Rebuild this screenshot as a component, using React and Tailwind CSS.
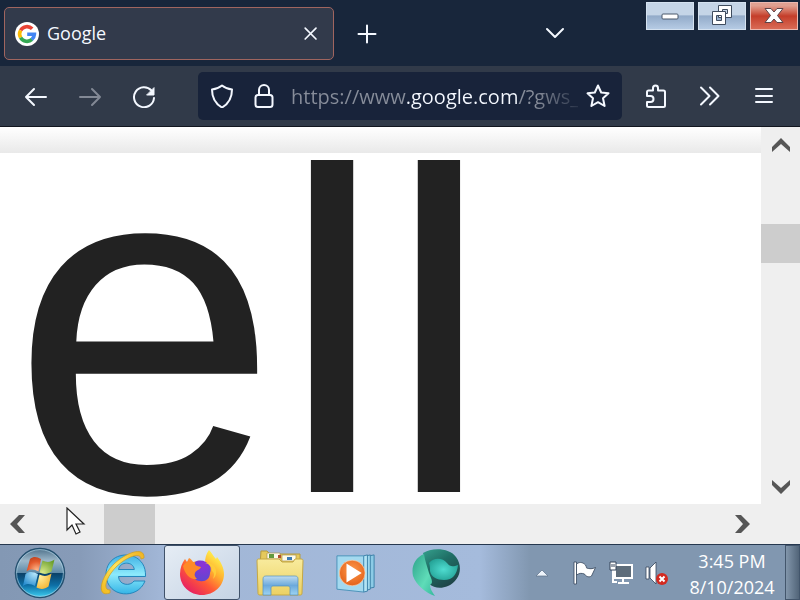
import React from 'react';

// ── Icons ──

function GoogleIcon() {
  return (
    <svg viewBox="0 0 24 24" className="w-6 h-6 shrink-0" aria-hidden="true">
      <circle cx="12" cy="12" r="12" fill="#fff" />
      <g fill="none" strokeWidth="3.6">
        <path d="M5.600 8.400A7.400 7.400 0 0 1 17.200 6.800" stroke="#ea4335" />
        <path d="M5.600 15.700A7.400 7.400 0 0 1 5.600 8.300" stroke="#fbbc05" />
        <path d="M17 17.400A7.400 7.400 0 0 1 5.600 15.600" stroke="#34a853" />
        <path d="M12.200 12.200H19.400A7.400 7.400 0 0 1 16.800 17.500" stroke="#4285f4" />
      </g>
    </svg>
  );
}

function LineIcon({ children, className = 'w-6 h-6' }) {
  return (
    <svg
      viewBox="0 0 24 24"
      className={className}
      fill="none"
      stroke="currentColor"
      strokeWidth="2"
      strokeLinecap="round"
      strokeLinejoin="round"
      aria-hidden="true"
    >
      {children}
    </svg>
  );
}

function ScrollArrow({ d }) {
  return (
    <svg viewBox="0 0 20 20" className="w-5 h-5" fill="#565656" aria-hidden="true">
      <path d={d} />
    </svg>
  );
}

function StartOrb() {
  return (
    <svg viewBox="0 0 52 52" className="w-13 h-13" aria-hidden="true">
      <defs>
        <linearGradient id="orbTop" x1="0" y1="0" x2="0" y2="1">
          <stop offset="0" stopColor="#4d7089" />
          <stop offset="0.25" stopColor="#9db8ca" />
          <stop offset="0.49" stopColor="#5d8aa8" />
          <stop offset="0.5" stopColor="#0b4066" />
          <stop offset="0.75" stopColor="#0d6fa6" />
          <stop offset="1" stopColor="#3fd0f2" />
        </linearGradient>
        <radialGradient id="orbRed" cx="0.7" cy="0.9" r="1">
          <stop offset="0" stopColor="#ffb98c" />
          <stop offset="0.6" stopColor="#e2592c" />
          <stop offset="1" stopColor="#b8401d" />
        </radialGradient>
        <radialGradient id="orbGreen" cx="0.2" cy="0.9" r="1">
          <stop offset="0" stopColor="#d8e98a" />
          <stop offset="1" stopColor="#6a9e2b" />
        </radialGradient>
        <radialGradient id="orbBlue" cx="0.8" cy="0.1" r="1">
          <stop offset="0" stopColor="#b6e6fb" />
          <stop offset="1" stopColor="#2b8fd0" />
        </radialGradient>
        <radialGradient id="orbYellow" cx="0.2" cy="0.2" r="1">
          <stop offset="0" stopColor="#fff0a0" />
          <stop offset="1" stopColor="#f2ae27" />
        </radialGradient>
      </defs>
      <circle cx="26" cy="26" r="24.5" fill="url(#orbTop)" stroke="#24506f" strokeWidth="1.500" />
      <circle cx="26" cy="26" r="23.4" fill="none" stroke="#b8dcee" strokeOpacity="0.6" />
      <path d="M16 12c4-3 7-2 11 0l-2.500 12.500c-4-2-8-3-12 0z" fill="url(#orbRed)" />
      <path d="M28.500 13.500c4 2 8 2 12-1l-3 12c-4 3-8 3-12 1z" fill="url(#orbGreen)" />
      <path d="M11.500 27c4-3 8-2 12.500 0l-3 12c-4-2-8-3-12 0z" fill="url(#orbBlue)" />
      <path d="M25.500 27.500c4 2 8 2 12-1l-3 13c-4 3-8 3-12 1z" fill="url(#orbYellow)" />
    </svg>
  );
}

function ExplorerE() {
  return (
    <svg viewBox="0 0 48 48" className="w-12 h-12" aria-hidden="true">
      <defs>
        <linearGradient id="ieBlue" x1="0" y1="0" x2="0" y2="1">
          <stop offset="0" stopColor="#3fb0e4" />
          <stop offset="0.5" stopColor="#8deafc" />
          <stop offset="1" stopColor="#35b4e6" />
        </linearGradient>
        <linearGradient id="ieGold" x1="0" y1="1" x2="1" y2="0">
          <stop offset="0" stopColor="#f0b81c" />
          <stop offset="0.5" stopColor="#ffe45c" />
          <stop offset="1" stopColor="#eeb01e" />
        </linearGradient>
      </defs>
      <path
        d="M45.500 27.500H18.500c.5 9 12 10 15.500 4.500H45C38 51 7 49 6 26 6 -1 47-1 45.500 27.500zM18.500 20.500h15.800c-1-8.500-14.300-8.500-15.800 0z"
        fill="url(#ieBlue)"
        stroke="#2487bd"
        strokeWidth="1"
      />
      <path
        d="M10 44C-4 49 0 29 13 16 26 3 45-3 44 9l-3 1c0-7-13-3-24 7C6 28 2 41 10 41z"
        fill="url(#ieGold)"
        stroke="#cf9d20"
        strokeWidth="0.700"
      />
    </svg>
  );
}

function FirefoxIcon() {
  return (
    <svg viewBox="0 0 48 48" className="w-12 h-12" aria-hidden="true">
      <defs>
        <linearGradient id="fxBody" x1="0.85" y1="0.1" x2="0.2" y2="0.9">
          <stop offset="0" stopColor="#fff44f" />
          <stop offset="0.35" stopColor="#ffb02e" />
          <stop offset="0.65" stopColor="#ff5a36" />
          <stop offset="1" stopColor="#e82360" />
        </linearGradient>
        <radialGradient id="fxGlobe" cx="0.6" cy="0.2" r="0.9">
          <stop offset="0" stopColor="#8f32d6" />
          <stop offset="1" stopColor="#5a49d0" />
        </radialGradient>
      </defs>
      <path
        d="M31 1c3 3 4 6 7 9l1-2c4 5 7 11 7 17 0 12-10 21-22 21S2 37 2 25c0-6 2-11 5-15l2 3 2-4c2 1 3 2 4 4 5-1 9 0 12 1 0-5 1-9 4-13z"
        fill="url(#fxBody)"
      />
      <path
        d="M17 13c5-3 12-1 15 4 1 2 1 4 0 7 0 6-5 9-10 8-5 0-8-4-8-9z"
        fill="url(#fxGlobe)"
      />
      <path d="M5 17c3-5 8-6 12-3 0 2 1 3 6 4-1 3-5 3-6 6-1 2 0 4 2 6-6 1-12-4-14-13z" fill="#ff8a27" />
      <path d="M27 14c5 1 7 4 7 8 3 2 2 5 1 8 6-5 4-17-8-16z" fill="#ffcb3a" />
    </svg>
  );
}

function FolderIcon() {
  return (
    <svg viewBox="0 0 48 48" className="w-12 h-12" aria-hidden="true">
      <defs>
        <linearGradient id="folderFront" x1="0" y1="0" x2="0" y2="1">
          <stop offset="0" stopColor="#f8eb9d" />
          <stop offset="1" stopColor="#ecd163" />
        </linearGradient>
        <linearGradient id="folderStand" x1="0" y1="0" x2="0" y2="1">
          <stop offset="0" stopColor="#bfdcf0" />
          <stop offset="0.5" stopColor="#6ba9dc" />
          <stop offset="1" stopColor="#9dd4f3" />
        </linearGradient>
      </defs>
      <path d="M5 2h6l3 3h30v12H4z" fill="#e5c95c" stroke="#b69b3e" />
      <path d="M11 4h13v6H11zM26 6h14v6H26z" fill="#fdfbea" stroke="#aa9450" strokeWidth="0.700" />
      <path d="M13 5h5v4h-5z" fill="#639a3e" />
      <path d="M22 6h3v3h-3z" fill="#b24d2e" />
      <path d="M31 8h5v3h-5z" fill="#3c7bb4" />
      <path d="M1 12c0-2 1-2 2-2h20l3 3 11 0 2-3h6c2 0 2 1 2 2l-1 32c0 2-1 2-2 2H4c-2 0-2-1-2-2z" fill="url(#folderFront)" stroke="#c5a844" />
      <path d="M7 30c0-2 1-3 3-3h29c2 0 3 1 3 3v16h-8v-7c0-1-1-2-2-2H17c-1 0-2 1-2 2v7H7z" fill="url(#folderStand)" stroke="#5591bb" strokeWidth="0.700" />
    </svg>
  );
}

function MediaPlayerIcon() {
  return (
    <svg viewBox="0 0 42 42" className="w-10 h-10" aria-hidden="true">
      <defs>
        <radialGradient id="wmpDisc" cx="0.5" cy="0.4" r="0.6">
          <stop offset="0" stopColor="#ff9a4c" />
          <stop offset="1" stopColor="#e3621a" />
        </radialGradient>
      </defs>
      <path d="M35 3l5-1v34l-5 1z" fill="#8ccbe6" stroke="#3b7fa8" />
      <path d="M32 3l4-1v36l-4 1z" fill="#9dd8ee" stroke="#3b7fa8" />
      <path d="M29 3l4-1v38l-4 1z" fill="#b3e4f4" stroke="#3b7fa8" />
      <path d="M1 3h28v38L1 38z" fill="#a3d9ef" stroke="#4a91b8" />
      <circle cx="17" cy="21" r="13.500" fill="url(#wmpDisc)" stroke="#fcd5b0" strokeWidth="0.700" />
      <path d="M11 11l16 10-16 10z" fill="#fff" />
    </svg>
  );
}

function GreenSwirlIcon() {
  return (
    <svg viewBox="0 0 48 48" className="w-12 h-12" aria-hidden="true">
      <defs>
        <linearGradient id="swirlDark" x1="0" y1="0" x2="0.6" y2="1">
          <stop offset="0" stopColor="#35a08d" />
          <stop offset="0.45" stopColor="#1f6f66" />
          <stop offset="1" stopColor="#1f4548" />
        </linearGradient>
        <linearGradient id="swirlMint" x1="0" y1="0" x2="1" y2="1">
          <stop offset="0" stopColor="#2ca18a" />
          <stop offset="0.6" stopColor="#5fdcb8" />
          <stop offset="1" stopColor="#34b79c" />
        </linearGradient>
        <radialGradient id="swirlTeal" cx="0.5" cy="0.5" r="0.6">
          <stop offset="0" stopColor="#4fdcd0" />
          <stop offset="1" stopColor="#22a094" />
        </radialGradient>
      </defs>
      <path d="M11 4C20-2 38-1 44 8c8 11 3 24-8 29-7 3-14 2-19-2z" fill="url(#swirlDark)" />
      <path d="M12 5C3 9-1 17 1 27c3 9 13 17 22 20-3-4-5-8-5-11 4-2 1-7-1-12-2-7-4-12-5-19z" fill="url(#swirlMint)" />
      <path d="M17 14c5-6 14-5 18 0 3 4 6 4 11 2-1 9-5 15-14 15-7 0-13-3-14-9 0-3 0-5-1-8z" fill="url(#swirlTeal)" />
    </svg>
  );
}

// ── Browser chrome ──

function WindowControls() {
  const base = 'h-7 w-12 border border-[#d5e2f0] flex items-center justify-center';
  const glass = 'bg-linear-to-b from-[#c5d5e7] from-45% via-[#93abc9] via-50% to-[#b5cbe4]';
  return (
    <div className="flex gap-1 pt-0.5 pr-0.5">
      <button type="button" aria-label="Minimize" className={`${base} ${glass}`}>
        <svg viewBox="0 0 24 24" className="w-6 h-6">
          <rect x="4" y="10" width="16" height="5" rx="1" fill="#fff" stroke="#4a586b" />
        </svg>
      </button>
      <button type="button" aria-label="Restore" className={`${base} ${glass}`}>
        <svg viewBox="0 0 24 24" className="w-6 h-6" fillRule="evenodd" fill="#fff" stroke="#3f4c5e">
          <path d="M8.500 1.500h13v12h-13zM12.500 5.500h5v4h-5z" />
          <path d="M2.500 7.500h13v13h-13zM6.500 11.500h5v5h-5z" />
        </svg>
      </button>
      <button
        type="button"
        aria-label="Close"
        className="h-7 w-12 border border-[#eab8b0] flex items-center justify-center bg-linear-to-b from-[#e0a091] from-10% via-[#c43d2a] via-50% to-[#d96a55]"
      >
        <svg viewBox="0 0 24 24" className="w-6 h-6">
          <path
            d="M3 4.500h6l3 3.500 3-3.500h6l-5.500 7 5.500 7h-6L12 15l-3 3.500H3l5.500-7z"
            fill="#fff"
            stroke="#5b4348"
          />
        </svg>
      </button>
    </div>
  );
}

function TabBar() {
  return (
    <div className="h-[66px] bg-[#18263b] flex items-start shrink-0 pl-1 text-[#f4f8ff]">
      <div className="mt-[7px] h-[53px] w-[330px] rounded-[5px] border border-[#a0655f] bg-[#323a4b] flex items-center pl-2.5 pr-3">
        <GoogleIcon />
        <span className="ml-2 flex-1 text-[18px]">Google</span>
        <button type="button" aria-label="Close tab">
          <LineIcon className="w-5 h-5">
            <path d="M5 5l13 13M18 5L5 18" />
          </LineIcon>
        </button>
      </div>
      <button type="button" aria-label="New tab" className="ml-[21px] mt-[22px]">
        <LineIcon>
          <path d="M12 3.500v17M3.500 12h17" />
        </LineIcon>
      </button>
      <div className="flex-1" />
      <button type="button" aria-label="List all tabs" className="mr-[79px] mt-5">
        <LineIcon>
          <path d="M4 9l8 8 8-8" />
        </LineIcon>
      </button>
      <WindowControls />
    </div>
  );
}

function NavBar() {
  return (
    <div className="h-[61px] bg-[#313a49] border-b border-[#12161f] flex items-center shrink-0 pl-6 pr-6 text-[#f4f8ff]">
      <div className="flex items-center gap-[30px]">
        <button type="button" aria-label="Back">
          <LineIcon>
            <path d="M22 13H2M10 5l-8 8 8 8" />
          </LineIcon>
        </button>
        <button type="button" aria-label="Forward" disabled className="text-[#838995]">
          <LineIcon>
            <path d="M2 13h20M14 5l8 8-8 8" />
          </LineIcon>
        </button>
        <button type="button" aria-label="Reload">
          <LineIcon>
            <path d="M19.500 6.500A10 10 0 1 0 22 14" />
            <path d="M22 4v7h-7z" fill="currentColor" strokeWidth="1" />
          </LineIcon>
        </button>
      </div>

      {/* Address bar */}
      <div className="ml-[42px] h-12 flex-1 min-w-0 rounded-[5px] bg-[#18233a] flex items-center pl-3 pr-3">
        <LineIcon className="w-6 h-6 shrink-0">
          <path d="M12 1.500c3 2.500 6 3.500 10 4 0 8-3 14-10 18C5 19.500 2 13.500 2 5.500c4-.5 7-1.500 10-4z" />
        </LineIcon>
        <LineIcon className="w-6 h-6 shrink-0 ml-[18px]">
          <rect x="3.500" y="11" width="17" height="12" rx="2.500" />
          <path d="M7 11V6a5 5 0 0 1 10 0v5" />
        </LineIcon>
        <input
          type="text"
          aria-label="Address"
          defaultValue="https://www.google.com/?gws_"
          className="ml-[15px] pt-0.5 flex-1 min-w-0 text-[20px] text-transparent caret-white outline-none bg-clip-text bg-[linear-gradient(90deg,#878d9a_115px,#f4f8ff_116px,#f4f8ff_227px,#878d9a_228px,#878d9a_245px,#18233a_295px)]"
        />
        <button type="button" aria-label="Bookmark this page" className="ml-2">
          <LineIcon>
            <path d="M12 1.500l3.200 7 7.300.8-5.500 5 1.600 7.700L12 18.200 5.400 22 7 14.300l-5.500-5 7.300-.8z" />
          </LineIcon>
        </button>
      </div>

      <div className="ml-[22px] flex items-center gap-[30px]">
        <button type="button" aria-label="Extensions">
          <LineIcon>
            <path d="M3 12V8a1.500 1.500 0 0 1 1.500-1.500H9V4a2.500 2.500 0 0 1 5 0v2.500h5.500A1.500 1.500 0 0 1 21 8v13.500a1.500 1.500 0 0 1-1.500 1.500h-15A1.500 1.500 0 0 1 3 21.500V18h3.500a3 3 0 0 0 0-6z" />
          </LineIcon>
        </button>
        <button type="button" aria-label="More tools">
          <LineIcon>
            <path d="M3 3.500l8.500 8.500L3 20.500M12 3.500l8.500 8.500-8.500 8.500" />
          </LineIcon>
        </button>
        <button type="button" aria-label="Open menu">
          <LineIcon>
            <path d="M4 5h16M4 12h16M4 18h16" />
          </LineIcon>
        </button>
      </div>
    </div>
  );
}

// ── Page ──

function PageView() {
  return (
    <div className="flex-1 min-h-0 flex flex-col bg-[#efefef]">
      <div className="flex-1 min-h-0 flex">
        <main className="flex-1 min-w-0 flex flex-col bg-white">
          <div className="h-[26px] shrink-0 bg-linear-to-b from-white to-[#e9e9e9]" />
          <div className="mt-[7px] flex-1 min-h-0 overflow-hidden pl-[11px]">
            <p className="-mt-[75px] font-['Liberation_Sans',Arial,sans-serif] text-[481px] leading-none text-[#222]">
              ell
            </p>
          </div>
        </main>
        <div className="w-[39px] shrink-0 flex flex-col items-center pt-2 pb-2">
          <button type="button" aria-label="Scroll up">
            <ScrollArrow d="M10 3l9 9v5l-9-8-9 8v-5z" />
          </button>
          <div className="mt-[69px] h-[39px] w-full shrink-0 bg-[#cdcdcd]" />
          <div className="flex-1" />
          <button type="button" aria-label="Scroll down">
            <ScrollArrow d="M10 18l9-9V4l-9 8-9-8v5z" />
          </button>
        </div>
      </div>
      <div className="h-10 shrink-0 flex items-center pl-2 pr-12">
        <button type="button" aria-label="Scroll left">
          <ScrollArrow d="M2 10l9-9h6l-8 9 8 9h-6z" />
        </button>
        <div className="ml-[76px] h-full w-[51px] bg-[#cdcdcd]" />
        <div className="flex-1" />
        <button type="button" aria-label="Scroll right">
          <ScrollArrow d="M18 10L9 1H3l8 9-8 9h6z" />
        </button>
      </div>
    </div>
  );
}

// ── Taskbar ──

function SystemTray() {
  return (
    <div className="flex items-center text-white">
      <button type="button" aria-label="Show hidden icons">
        <svg viewBox="0 0 14 24" className="w-[14px] h-6">
          <path d="M1 15l6-6 6 6z" fill="#eef4fb" stroke="#5d7088" strokeWidth="0.700" />
        </svg>
      </button>
      <button type="button" aria-label="Action Center" className="ml-6">
        <svg viewBox="0 0 24 24" className="w-6 h-6" stroke="#35455a" strokeWidth="0.800">
          <path d="M1 1h2.500v22H1z" fill="#fff" />
          <path d="M3.500 3c4-3 7-1 9 1 1 2 1 3 1 3 3 1 6 1 9-.5l-4 8.500c-3 2-6 0-7-2-3-1-5-1-8 1z" fill="#fff" />
        </svg>
      </button>
      <button type="button" aria-label="Network" className="ml-3">
        <svg viewBox="0 0 24 24" className="w-6 h-6">
          <rect x="6" y="4" width="17" height="13" fill="#5e6d7b" stroke="#fff" strokeWidth="2" />
          <path d="M9 22h11M14 17v5M4 9v12h4" stroke="#fff" strokeWidth="2" fill="none" />
          <path d="M1 1h6v8H1z" fill="#fff" stroke="#35455a" />
          <path d="M3 3v3M5 3v3" stroke="#35455a" />
        </svg>
      </button>
      <button type="button" aria-label="Volume muted" className="ml-3">
        <svg viewBox="0 0 24 24" className="w-6 h-6">
          <path d="M1 6h3v12H1zM5 7l6-6v22l-6-6z" fill="#fff" stroke="#35455a" strokeWidth="0.800" />
          <circle cx="17" cy="18" r="6" fill="#d32a20" />
          <path d="M14.500 15.500l5 5M19.500 15.500l-5 5" stroke="#fff" strokeWidth="2" />
        </svg>
      </button>
      <div className="ml-3 w-[102px] h-14 pt-[3px] text-center text-[18px] leading-[26px]">
        <div>3:45 PM</div>
        <div>8/10/2024</div>
      </div>
      <button
        type="button"
        aria-label="Show desktop"
        className="ml-0.5 h-[55px] w-[15px] border border-[#43566c] bg-linear-to-r from-[#8296ab] to-[#526579]"
      />
    </div>
  );
}

function Taskbar() {
  return (
    <div className="h-14 shrink-0 border-t border-[#26384f] flex items-center bg-[linear-gradient(90deg,#8398b4_0,#879bb8_80px,#a1b6d6_160px,#a5bbdc_480px,#8197b0_530px)]">
      <button type="button" aria-label="Start" className="ml-3.5">
        <StartOrb />
      </button>
      <button type="button" aria-label="Internet Explorer" className="ml-[34px]">
        <ExplorerE />
      </button>
      <button
        type="button"
        aria-label="Firefox"
        className="ml-4 h-[55px] w-[76px] rounded-[3px] border border-[#40526a] bg-linear-to-br from-[#e6edf5] to-[#c5d3e4] flex items-center justify-center"
      >
        <FirefoxIcon />
      </button>
      <button type="button" aria-label="Windows Explorer" className="ml-4">
        <FolderIcon />
      </button>
      <button type="button" aria-label="Media Player" className="ml-8">
        <MediaPlayerIcon />
      </button>
      <button type="button" aria-label="Browser" className="ml-9">
        <GreenSwirlIcon />
      </button>
      <div className="flex-1" />
      <SystemTray />
    </div>
  );
}

export default function App() {
  return (
    <div className="relative h-screen flex flex-col overflow-hidden font-['Open_Sans','Noto_Sans',sans-serif]">
      <TabBar />
      <NavBar />
      <PageView />
      <Taskbar />

      {/* Mouse pointer */}
      <svg viewBox="0 0 20 30" className="absolute left-[66px] top-[507px] w-5 h-[30px] pointer-events-none" aria-hidden="true">
        <path d="M1 1v22l5-5 4 9 4-2-4-8h8z" fill="#fff" stroke="#222" strokeWidth="1.200" />
      </svg>
    </div>
  );
}
